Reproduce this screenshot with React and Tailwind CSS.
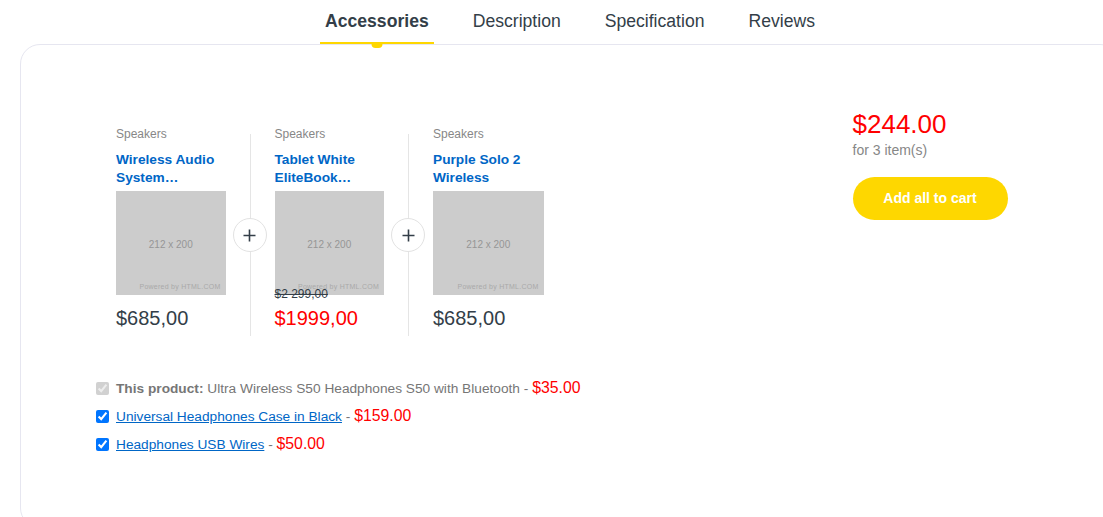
import React from "react";

function Placeholder() {
  return (
    <div className="mt-[4px] h-[104px] w-full bg-[#cccccc] flex flex-col">
      <div className="flex-1 flex items-center justify-center pt-[14px] text-[10px] text-[#969696]">212 x 200</div>
      <div className="self-end pr-[5px] pb-[4px] text-[7px] leading-[8px] tracking-[0.25px] text-[#a9a9a9]">Powered by HTML.COM</div>
    </div>
  );
}

function PlusIcon() {
  return (
    <svg width="13" height="13" viewBox="0 0 13 13" fill="none" stroke="#333e48" strokeWidth="1.6">
      <path d="M6.5 0.5v12M0.5 6.5h12" />
    </svg>
  );
}

function Product({ title1, title2, oldPrice, price, red, divider }) {
  return (
    <div className={"relative w-[158.5px] px-[24px] pb-[6px] " + (divider ? "border-r border-[#e5e5e5]" : "")}>
      <div className="-mt-[8px] text-[12px] leading-[16px] text-[#878787]">Speakers</div>
      <div className="mt-[9px] text-[13.7px] leading-[18px] font-bold text-[#0066c6]">
        {title1}
        <br />
        {title2}
      </div>
      <Placeholder />
      <div className="relative mt-[11px]">
        {oldPrice && (
          <div className="absolute left-0 top-[-19px] text-[12px] leading-[14px] line-through text-[#333e48]">{oldPrice}</div>
        )}
        <div className={"text-[20px] leading-[24px] " + (red ? "text-[#ff0000]" : "text-[#333e48]")}>{price}</div>
      </div>
      {divider && (
        <div className="absolute top-[84px] right-[-17px] z-10 w-[34px] h-[34px] rounded-full border border-[#e2e2e2] bg-white flex items-center justify-center">
          <PlusIcon />
        </div>
      )}
    </div>
  );
}

export default function App() {
  const tabs = ["Accessories", "Description", "Specification", "Reviews"];
  return (
    <div className="w-full h-[517px] overflow-hidden bg-white font-['Liberation_Sans',Arial,sans-serif]">
      <div className="ml-[20px] w-[1100px]">
        <ul className="flex justify-center gap-[44px] h-[44px]">
          {tabs.map((t, i) => (
            <li key={t} className="relative flex items-center pb-[1px]">
              <span className={"text-[17.6px] text-[#333e48] " + (i === 0 ? "font-bold" : "")}>{t}</span>
              {i === 0 && (
                <>
                  <span className="absolute bottom-0 left-[-5px] right-[-5px] h-[2px] bg-[#fed700]" />
                  <span className="absolute top-[44px] left-1/2 -translate-x-1/2 z-10 w-[11px] h-[4px] rounded-b-full bg-[#fed700]" />
                </>
              )}
            </li>
          ))}
        </ul>
        <div className="h-[484px] border border-[#e6e6f0] rounded-[20px] pl-[71px]">
          <div className="flex items-start pt-[64px]">
            <div className="flex mt-[25px]">
              <Product title1="Wireless Audio" title2="System…" price="$685,00" divider />
              <Product title1="Tablet White" title2="EliteBook…" oldPrice="$2 299,00" price="$1999,00" red divider />
              <Product title1="Purple Solo 2" title2="Wireless" price="$685,00" />
            </div>
            <div className="ml-[285px] flex flex-col">
              <div className="text-[26px] leading-[30px] text-[#ff0000]">$244.00</div>
              <div className="mt-[2px] text-[14px] leading-[18px] text-[#878787]">for 3 item(s)</div>
              <button className="mt-[18px] w-[155px] h-[43px] rounded-full bg-[#fed700] text-white font-bold text-[14px]">
                Add all to cart
              </button>
            </div>
          </div>
          <div className="mt-[38px] pl-[4px] flex flex-col">
            <div className="h-[28px] flex items-center gap-[7px]">
              <input type="checkbox" checked disabled readOnly className="w-[13px] h-[13px]" />
              <div className="text-[13.7px] text-[#767676]">
                <span className="font-bold">This product:</span> Ultra Wireless S50 Headphones S50 with Bluetooth -{" "}
                <span className="text-[15.8px] text-[#ff0000]">$35.00</span>
              </div>
            </div>
            <div className="h-[28px] flex items-center gap-[7px]">
              <input type="checkbox" checked readOnly className="w-[13px] h-[13px]" />
              <div className="text-[13.7px] text-[#767676]">
                <a href="#" className="underline text-[#0066c6]">Universal Headphones Case in Black</a> -{" "}
                <span className="text-[15.8px] text-[#ff0000]">$159.00</span>
              </div>
            </div>
            <div className="h-[28px] flex items-center gap-[7px]">
              <input type="checkbox" checked readOnly className="w-[13px] h-[13px]" />
              <div className="text-[13.7px] text-[#767676]">
                <a href="#" className="underline text-[#0066c6]">Headphones USB Wires</a> -{" "}
                <span className="text-[15.8px] text-[#ff0000]">$50.00</span>
              </div>
            </div>
          </div>
        </div>
      </div>
    </div>
  );
}
